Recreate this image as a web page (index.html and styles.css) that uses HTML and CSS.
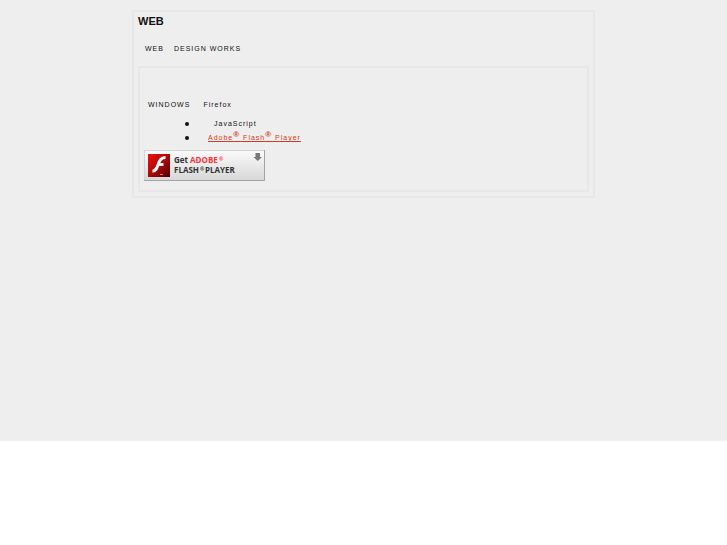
FILE: index.html
```html
<!DOCTYPE html>
<html lang="en">
<head>
  <meta charset="UTF-8">
  <meta name="viewport" content="width=device-width, initial-scale=1.0">
  <title>WEB</title>
  <link rel="stylesheet" href="styles.css">
</head>
<body>
  <div class="page">
    <main class="container">
      <h1>WEB</h1>
      <p class="intro"><span>WEB</span><span>DESIGN WORKS</span></p>

      <section class="requirements">
        <p class="system"><span>WINDOWS</span><span>Firefox</span></p>
        <ul>
          <li><span class="script">JavaScript</span></li>
          <li><a href="#">Adobe<sup>®</sup> Flash<sup>®</sup> Player</a></li>
        </ul>
        <a class="flash-button" href="#" aria-label="Get Adobe Flash Player">
          <svg width="121" height="31" viewBox="0 0 121 31">
            <defs>
              <linearGradient id="silver" x1="0" y1="0" x2="0" y2="1">
                <stop offset="0" stop-color="#fafafa"/>
                <stop offset="1" stop-color="#d8d8d8"/>
              </linearGradient>
              <linearGradient id="red" x1="0" y1="0" x2="1" y2="1">
                <stop offset="0" stop-color="#f01010"/>
                <stop offset="0.5" stop-color="#b00808"/>
                <stop offset="1" stop-color="#4a0000"/>
              </linearGradient>
            </defs>
            <rect width="121" height="31" fill="#d4d4d4"/>
            <rect x="1" y="1" width="119" height="29" fill="url(#silver)"/>
            <path d="M0 30.500H120.500V0" fill="none" stroke="#a4a4a4"/>
            <rect x="4" y="4" width="22" height="23" fill="url(#red)"/>
            <path d="M21.500 7.500C16.500 7.500 15.500 11 14 15C12.500 19 11.500 21 8.500 21.200" fill="none" stroke="#fff" stroke-width="3"/>
            <path d="M14 14.500H19.500" stroke="#fff" stroke-width="2.800"/>
            <path d="M16 24.500H19" stroke="#c98080" stroke-width="1"/>
            <g class="flash-text">
              <text x="30" y="13">Get <tspan class="adobe">ADOBE</tspan></text>
              <text x="75" y="11" class="mark adobe">®</text>
              <text x="30" y="23">FLASH</text>
              <text x="56" y="21" class="mark">®</text>
              <text x="61" y="23">PLAYER</text>
            </g>
            <path d="M111.500 3H116V7H118L113.800 11L109.500 7H111.500Z" fill="#777"/>
          </svg>
        </a>
      </section>
    </main>
  </div>
</body>
</html>
```
FILE: styles.css
```css
body {
  margin: 0;
  background: #fff;
  color: #111;
  font-family: "Liberation Sans", Arial, sans-serif;
  font-size: 7px;
  line-height: 14px;
  letter-spacing: 1px;
}
.page {
  min-height: 81vh;
  padding: 10px 132px;
  box-sizing: border-box;
  background: #eee;
}
.container {
  padding: 4px;
  border: 2px solid #e7e7e7;
}
h1 {
  margin: 0;
  font-size: 11px;
  line-height: 10px;
  letter-spacing: 0;
}
p {
  display: flex;
  margin: 0;
}
.intro {
  gap: 10px;
  padding: 16px 7px 10px;
}
.requirements {
  padding: 30px 4px 9px;
  border: 2px solid #e7e7e7;
}
.system {
  gap: 13px;
  padding: 0 4px;
}
ul {
  margin: 5px 0;
  padding-left: 41px;
  list-style: none;
}
li {
  display: flex;
  align-items: center;
  gap: 19px;
}
li::before {
  content: "";
  width: 4px;
  height: 4px;
  border-radius: 50%;
  background: #111;
}
.script {
  padding-left: 6px;
}
a {
  color: #d03a20;
}
sup {
  font-size: 8px;
  font-weight: bold;
  line-height: 0;
}
.flash-button {
  display: block;
  width: 121px;
}
.flash-button svg {
  display: block;
}
.flash-text {
  font-family: "Open Sans", "Noto Sans", sans-serif;
  font-size: 8px;
  font-weight: bold;
  letter-spacing: 0;
  fill: #333;
}
.adobe {
  fill: #f5333a;
}
.mark {
  font-size: 5px;
}
```
